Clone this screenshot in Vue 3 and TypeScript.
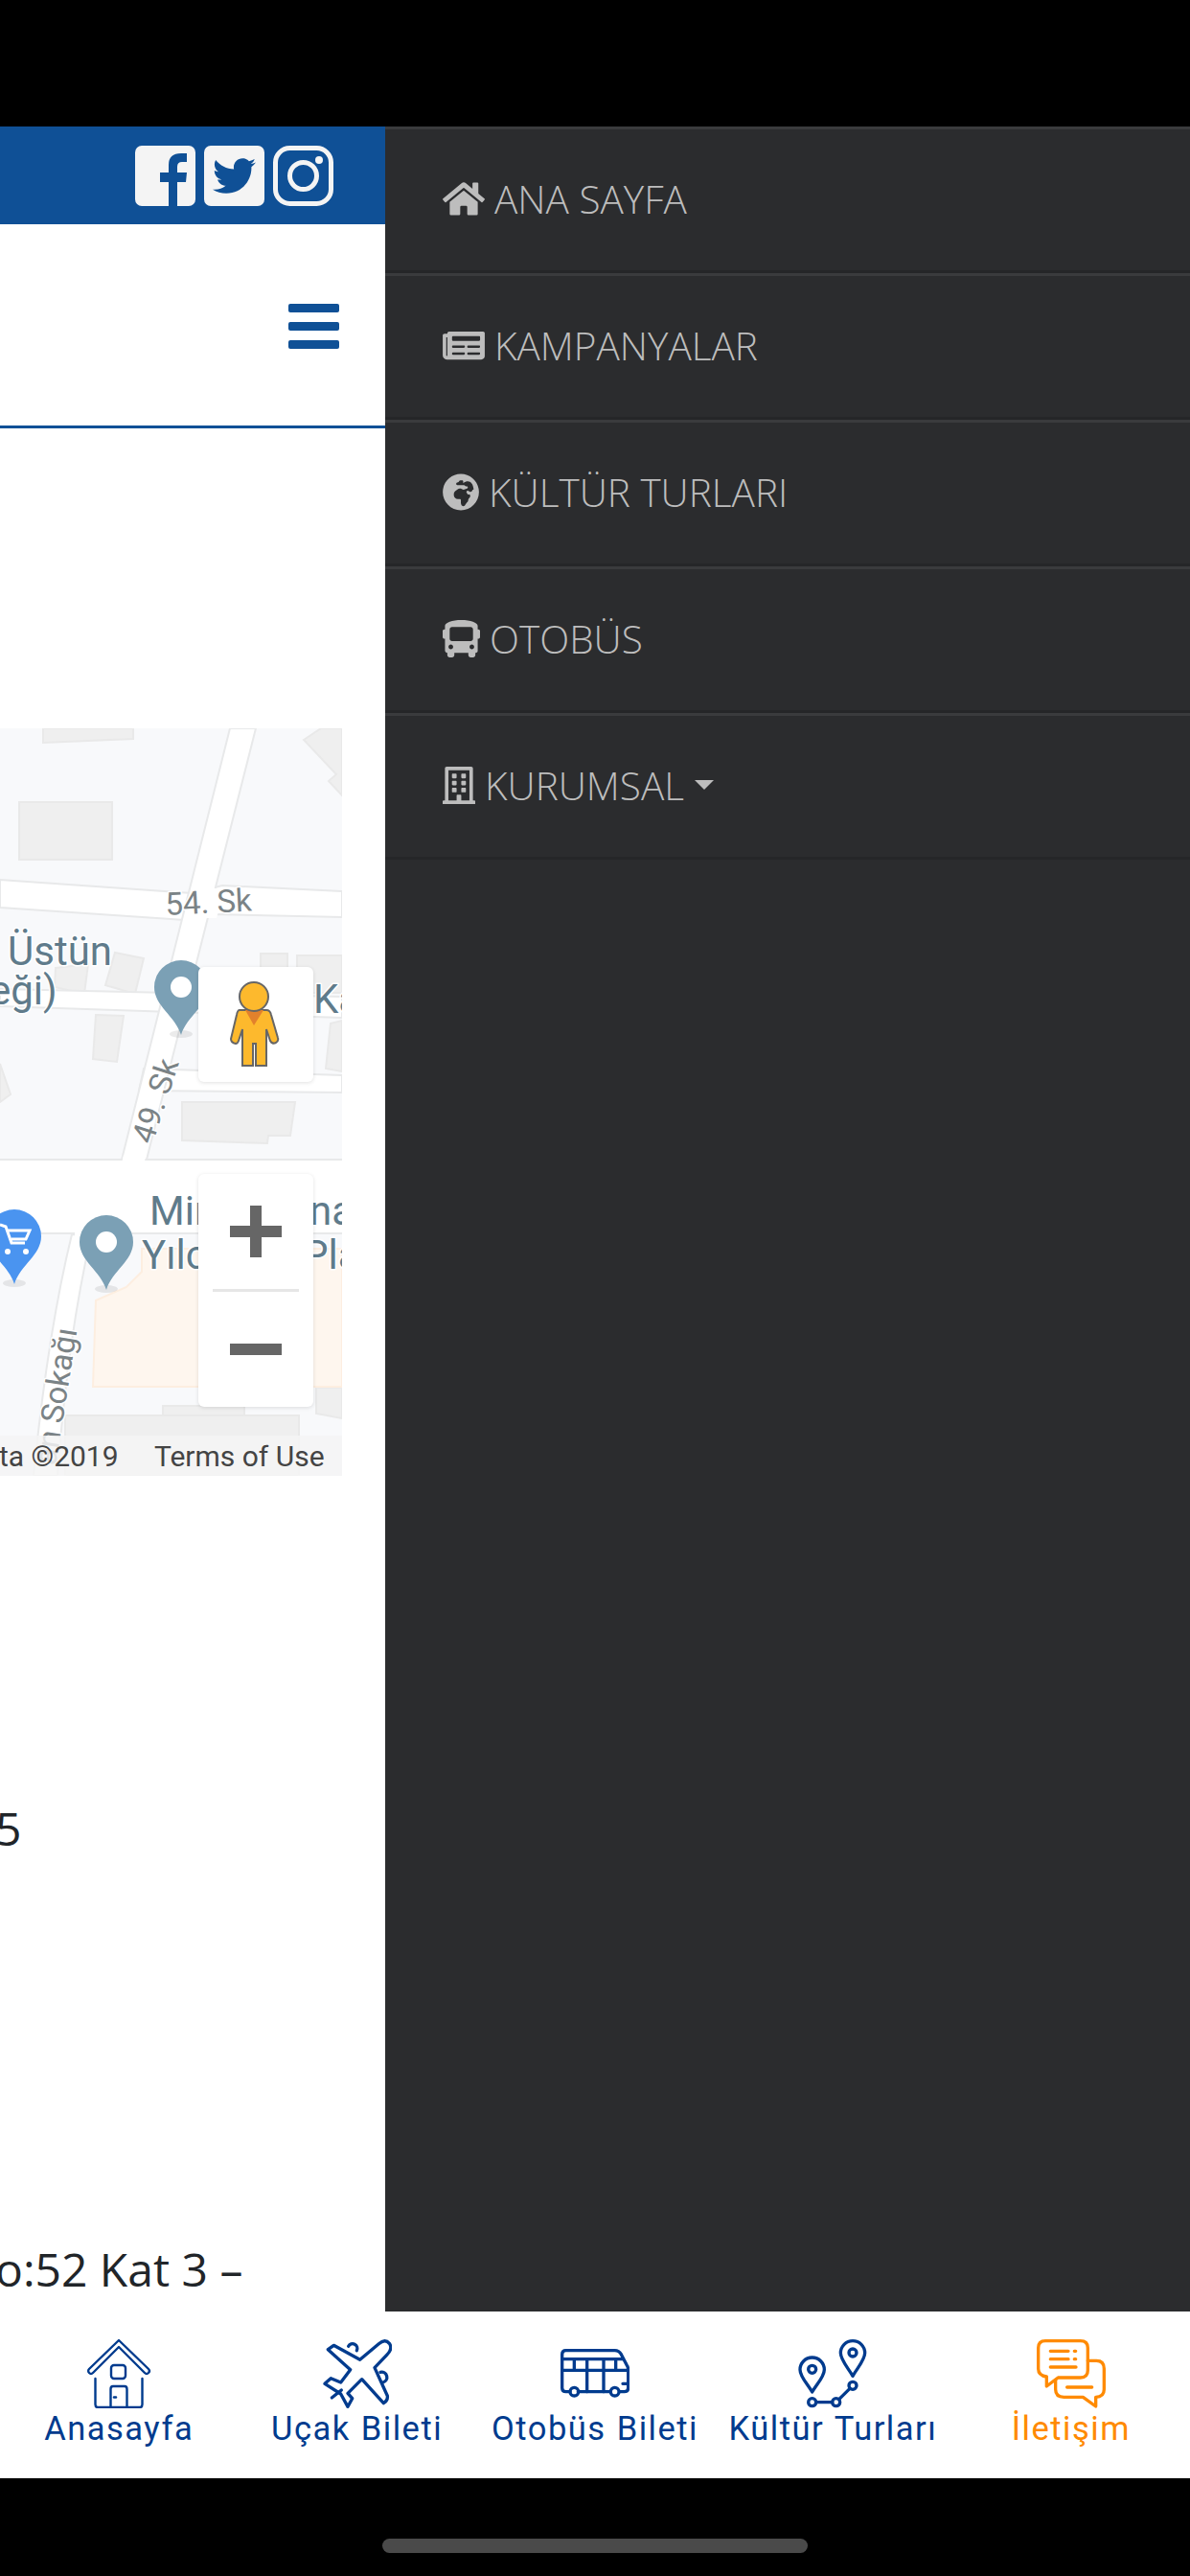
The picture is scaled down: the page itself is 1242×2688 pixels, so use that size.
<script setup lang="ts">
interface MenuItem {
  label: string
  viewBox: string
  width: number
  d: string
  caret?: boolean
}

const menu: MenuItem[] = [
  {
    label: 'ANA SAYFA',
    viewBox: '0 0 576 512',
    width: 44,
    d: 'M280.37 148.26L96 300.11V464a16 16 0 0 0 16 16l112.06-.29a16 16 0 0 0 15.92-16V368a16 16 0 0 1 16-16h64a16 16 0 0 1 16 16v95.64a16 16 0 0 0 16 16.05L464 480a16 16 0 0 0 16-16V300L295.67 148.26a12.19 12.19 0 0 0-15.3 0zM571.6 251.47L488 182.56V44.05a12 12 0 0 0-12-12h-56a12 12 0 0 0-12 12v72.61L318.47 43a48 48 0 0 0-61 0L4.34 251.47a12 12 0 0 0-1.6 16.9l25.5 31A12 12 0 0 0 45.15 301l235.22-193.74a12.19 12.19 0 0 1 15.3 0L530.9 301a12 12 0 0 0 16.9-1.6l25.5-31a12 12 0 0 0-1.7-16.93z'
  },
  {
    label: 'KAMPANYALAR',
    viewBox: '0 0 576 512',
    width: 44,
    d: 'M552 64H88c-13.255 0-24 10.745-24 24v8H24c-13.255 0-24 10.745-24 24v272c0 30.928 25.072 56 56 56h472c26.51 0 48-21.49 48-48V88c0-13.255-10.745-24-24-24zM56 400a8 8 0 0 1-8-8V144h16v248a8 8 0 0 1-8 8zm236-16H140c-6.627 0-12-5.373-12-12v-8c0-6.627 5.373-12 12-12h152c6.627 0 12 5.373 12 12v8c0 6.627-5.373 12-12 12zm208 0H348c-6.627 0-12-5.373-12-12v-8c0-6.627 5.373-12 12-12h152c6.627 0 12 5.373 12 12v8c0 6.627-5.373 12-12 12zm-208-96H140c-6.627 0-12-5.373-12-12v-8c0-6.627 5.373-12 12-12h152c6.627 0 12 5.373 12 12v8c0 6.627-5.373 12-12 12zm208 0H348c-6.627 0-12-5.373-12-12v-8c0-6.627 5.373-12 12-12h152c6.627 0 12 5.373 12 12v8c0 6.627-5.373 12-12 12zm0-96H140c-6.627 0-12-5.373-12-12v-40c0-6.627 5.373-12 12-12h360c6.627 0 12 5.373 12 12v40c0 6.627-5.373 12-12 12z'
  },
  {
    label: 'KÜLTÜR TURLARI',
    viewBox: '0 0 496 512',
    width: 38,
    d: 'M248 8C111.03 8 0 119.03 0 256s111.03 248 248 248 248-111.03 248-248S384.97 8 248 8zm160 215.5v6.93c0 5.87-3.32 11.24-8.57 13.86l-15.39 7.7a15.485 15.485 0 0 1-15.53-.97l-18.21-12.14a15.52 15.52 0 0 0-13.5-1.81l-2.65.88c-9.7 3.23-13.66 14.79-7.99 23.3l13.24 19.86c2.87 4.31 7.71 6.9 12.89 6.9h8.21c8.56 0 15.5 6.94 15.5 15.5v11.34c0 3.35-1.09 6.62-3.1 9.3l-18.74 24.98c-1.42 1.9-2.39 4.1-2.83 6.43l-4.3 22.83c-.62 3.29-2.29 6.29-4.76 8.56a159.608 159.608 0 0 0-25 29.16l-13.03 19.55a27.756 27.756 0 0 1-23.09 12.36c-10.51 0-20.12-5.94-24.82-15.34a78.902 78.902 0 0 1-8.33-35.29V367.5c0-8.56-6.94-15.5-15.5-15.5h-25.88c-14.49 0-28.38-5.76-38.63-16a54.659 54.659 0 0 1-16-38.63v-14.06c0-17.19 8.1-33.38 21.85-43.7l27.58-20.69a54.663 54.663 0 0 1 32.78-10.93h.89c8.48 0 16.85 1.97 24.43 5.77l14.72 7.36c3.68 1.84 7.93 2.14 11.83.84l47.31-15.77c6.33-2.11 10.6-8.03 10.6-14.7 0-8.56-6.94-15.5-15.5-15.5h-10.09c-4.11 0-8.05-1.63-10.96-4.54l-6.92-6.92a15.493 15.493 0 0 0-10.96-4.54H199.5c-8.56 0-15.5-6.94-15.5-15.5v-4.4c0-7.11 4.84-13.31 11.74-15.04l14.45-3.61c3.74-.94 7-3.23 9.14-6.44l8.08-12.11c2.87-4.31 7.71-6.9 12.89-6.9h24.21c8.56 0 15.5 6.94 15.5 15.5v21.7C359.23 71.63 422.02 131.63 422 223.5z'
  },
  {
    label: 'OTOBÜS',
    viewBox: '0 0 512 512',
    width: 39,
    d: 'M488 128h-8V80c0-44.8-99.2-80-224-80S32 35.2 32 80v48h-8c-13.25 0-24 10.74-24 24v80c0 13.25 10.75 24 24 24h8v160c0 17.67 14.33 32 32 32v32c0 17.67 14.33 32 32 32h32c17.67 0 32-14.33 32-32v-32h192v32c0 17.67 14.33 32 32 32h32c17.67 0 32-14.33 32-32v-32h6.4c16 0 25.6-12.8 25.6-25.6V256h8c13.25 0 24-10.75 24-24v-80c0-13.26-10.75-24-24-24zM112 400c-17.67 0-32-14.33-32-32s14.33-32 32-32 32 14.33 32 32-14.33 32-32 32zm16-112c-17.67 0-32-14.33-32-32V128c0-17.67 14.33-32 32-32h256c17.67 0 32 14.33 32 32v128c0 17.67-14.33 32-32 32H128zm272 112c-17.67 0-32-14.33-32-32s14.33-32 32-32 32 14.33 32 32-14.33 32-32 32z'
  },
  {
    label: 'KURUMSAL',
    viewBox: '0 0 448 512',
    width: 34,
    caret: true,
    d: 'M128 148v-40c0-6.6 5.4-12 12-12h40c6.6 0 12 5.4 12 12v40c0 6.6-5.4 12-12 12h-40c-6.6 0-12-5.4-12-12zm140 12h40c6.6 0 12-5.4 12-12v-40c0-6.6-5.4-12-12-12h-40c-6.6 0-12 5.4-12 12v40c0 6.6 5.4 12 12 12zm-128 96h40c6.6 0 12-5.4 12-12v-40c0-6.6-5.4-12-12-12h-40c-6.6 0-12 5.4-12 12v40c0 6.6 5.4 12 12 12zm128 0h40c6.6 0 12-5.4 12-12v-40c0-6.6-5.4-12-12-12h-40c-6.6 0-12 5.4-12 12v40c0 6.6 5.4 12 12 12zm-76 84v-40c0-6.6-5.4-12-12-12h-40c-6.6 0-12 5.4-12 12v40c0 6.6 5.4 12 12 12h40c6.6 0 12-5.4 12-12zm76 12h40c6.6 0 12-5.4 12-12v-40c0-6.6-5.4-12-12-12h-40c-6.6 0-12 5.4-12 12v40c0 6.6 5.4 12 12 12zm180 124v36H0v-36c0-6.6 5.4-12 12-12h19.5V24c0-13.3 10.7-24 24-24h337c13.3 0 24 10.7 24 24v440H436c6.6 0 12 5.4 12 12zM79.5 463H192v-67c0-6.6 5.4-12 12-12h40c6.6 0 12 5.4 12 12v67h112.5V49L80 48l-.5 415z'
  }
]

const buildings: string[] = [
  '45,760 139,760 139,771 45,775',
  '20,837 117,837 117,897 20,897',
  '317,772 335,760 357,760 357,830 343,815 351,808',
  '58,1010 92,1006 88,1037 57,1030',
  '120,994 150,1000 141,1037 110,1028',
  '100,1059 129,1060 122,1108 97,1105',
  '272,995 300,995 300,1040 272,1040',
  '310,997 357,997 357,1036 310,1036',
  '345,1068 357,1065 357,1118 340,1115',
  '190,1150 308,1150 303,1185 280,1185 279,1193 190,1190',
  '0,1110 11,1142 0,1150',
  '330,1448 357,1448 357,1480 330,1475',
  '170,1467 255,1467 255,1477 170,1477',
  '68,1477 312,1477 312,1540 68,1540'
]
</script>

<template>
  <div class="screen">
    <div class="status-bar"></div>

    <div class="middle">
      <div class="page">
        <div class="social-bar">
          <svg class="social" viewBox="0 0 63 63">
            <rect width="63" height="63" rx="7" fill="#f4f4f4" />
            <path d="M35 63V38H26V28H35V20Q35 8 48 8H54V17H49Q44 17 44 22V28H54L53 38H44V63Z" fill="#0f5096" />
          </svg>
          <svg class="social" viewBox="0 0 63 63">
            <rect width="63" height="63" rx="7" fill="#f4f4f4" />
            <svg x="9" y="9" width="45" height="45" viewBox="0 0 512 512">
              <path fill="#0f5096" d="M459.37 151.716c.325 4.548.325 9.097.325 13.645 0 138.72-105.583 298.558-298.558 298.558-59.452 0-114.68-17.219-161.137-47.106 8.447.974 16.568 1.299 25.34 1.299 49.055 0 94.213-16.568 130.274-44.832-46.132-.975-84.792-31.188-98.112-72.772 6.498.974 12.995 1.624 19.818 1.624 9.421 0 18.843-1.3 27.614-3.573-48.081-9.747-84.143-51.98-84.143-102.985v-1.299c13.969 7.797 30.214 12.67 47.431 13.319-28.264-18.843-46.781-51.005-46.781-87.391 0-19.492 5.197-37.36 14.294-52.954 51.655 63.675 129.3 105.258 216.365 109.807-1.624-7.797-2.599-15.918-2.599-24.04 0-57.828 46.782-104.934 104.934-104.934 30.213 0 57.502 12.67 76.67 33.137 23.715-4.548 46.456-13.32 66.599-25.34-7.798 24.366-24.366 44.833-46.132 57.827 21.117-2.273 41.584-8.122 60.426-16.243-14.292 20.791-32.161 39.308-52.628 54.253z" />
            </svg>
          </svg>
          <svg class="social" viewBox="0 0 63 63">
            <rect x="2.5" y="2.5" width="58" height="58" rx="15" fill="none" stroke="#f4f4f4" stroke-width="5" />
            <circle cx="31.5" cy="31.5" r="14" fill="none" stroke="#f4f4f4" stroke-width="5" />
            <circle cx="48" cy="15" r="4" fill="#f4f4f4" />
          </svg>
        </div>

        <div class="header">
          <div class="hamburger"><span></span><span></span><span></span></div>
        </div>

        <div class="map">
          <svg class="map-canvas" viewBox="0 760 357 780">
            <rect x="0" y="760" width="357" height="780" fill="#f8f9fb" />
            <polygon v-for="b in buildings" :key="b" :points="b" fill="#efefef" stroke="#e9e9e9" stroke-width="2" />
            <polygon points="148,1303 357,1303 357,1447 97,1447 100,1357 132,1343 148,1327" fill="#fef6ee" stroke="#fdeee0" stroke-width="2" />
            <g fill="#fff" stroke="#e8e9ea" stroke-width="2">
              <polygon points="0,918 200,932 232,924 357,930 357,957 223,954 193,960 0,947" />
              <polygon points="0,1032 357,1040 357,1062 0,1050" />
              <polygon points="150,1115 357,1122 357,1140 145,1138" />
              <polygon points="240,760 267,760 153,1210 127,1210" />
              <path d="M75 1288Q50 1390 35 1540H60Q70 1400 95 1290Z" />
              <rect x="-4" y="1210" width="365" height="77" />
            </g>
            <g fill="#fff">
              <polygon points="202,927 235,927 226,958 194,958" />
              <polygon points="78,1280 92,1280 92,1292 78,1292" />
              <polygon points="129,1205 153,1205 150,1214 127,1214" />
            </g>

            <g class="label road" font-size="33">
              <text x="173" y="955" transform="rotate(-3 173 955)">54. Sk</text>
              <text x="159" y="1195" transform="rotate(-72 159 1195)">49. Sk</text>
              <text x="58" y="1530" transform="rotate(-81 58 1530)">an Sokağı</text>
            </g>

            <rect x="0" y="1498" width="357" height="42" fill="#f4f4f4" opacity="0.85" />

            <g class="label place" font-size="42">
              <text x="8" y="1007">Üstün</text>
              <text x="-11" y="1048">eği)</text>
              <text x="327" y="1057">Ka</text>
              <text x="156" y="1278">Mir</text>
              <text x="323" y="1278">na</text>
              <text x="148" y="1324">Yılc</text>
              <text x="316" y="1324">Pla</text>
            </g>

            <ellipse cx="189" cy="1079" rx="12" ry="4" fill="#000" opacity="0.08" />
            <path d="M189 1002A28 28 0 0 1 217 1030C217 1050 195 1060 189 1080C183 1060 161 1050 161 1030A28 28 0 0 1 189 1002Z" fill="#7ba0b5" />
            <circle cx="189" cy="1030" r="11" fill="#fff" />

            <ellipse cx="111" cy="1345" rx="12" ry="4" fill="#000" opacity="0.08" />
            <path d="M111 1268A28 28 0 0 1 139 1296C139 1316 117 1326 111 1346C105 1326 83 1316 83 1296A28 28 0 0 1 111 1268Z" fill="#7ba0b5" />
            <circle cx="111" cy="1296" r="11" fill="#fff" />

            <ellipse cx="15" cy="1339" rx="12" ry="4" fill="#000" opacity="0.08" />
            <path d="M15 1262A28 28 0 0 1 43 1290C43 1310 21 1320 15 1340C9 1320 -13 1310 -13 1290A28 28 0 0 1 15 1262Z" fill="#4a94f0" />
            <path d="M0 1278L6 1280L12 1297H26M8 1284H31L27 1293H12" fill="none" stroke="#fff" stroke-width="3" />
            <circle cx="8" cy="1306" r="3" fill="#fff" />
            <circle cx="27" cy="1306" r="3" fill="#fff" />

            <text class="legal" x="-1" y="1530" font-size="30">ta ©2019</text>
            <text class="legal" x="161" y="1530" font-size="30">Terms of Use</text>
          </svg>

          <div class="map-control pegman-box">
            <svg class="pegman" viewBox="238 1024 54 92">
              <path d="M250 1055Q248 1055 247 1060L241 1085Q241 1089 246 1090Q248 1090 249 1087L253 1075V1113H264V1090H267V1113H278V1075L282 1087Q284 1091 288 1089Q291 1087 290 1084L283 1060Q282 1055 278 1055Z" fill="#fdb92d" stroke="#666" stroke-width="2" />
              <polygon points="256,1055 275,1055 265,1071" fill="#e2812c" />
              <circle cx="265" cy="1041" r="15" fill="#fdb92d" stroke="#666" stroke-width="2" />
            </svg>
          </div>

          <div class="map-control zoom-box">
            <div class="zoom-btn"><span class="plus"></span></div>
            <div class="zoom-divider"></div>
            <div class="zoom-btn"><span class="minus"></span></div>
          </div>
        </div>

        <p class="line line-phone">5</p>
        <p class="line line-address">o:52 Kat 3 –</p>
      </div>

      <nav class="drawer">
        <ul class="drawer-list">
          <li v-for="item in menu" :key="item.label" class="drawer-item">
            <svg class="drawer-icon" :viewBox="item.viewBox" :width="item.width" height="39">
              <path :d="item.d" />
            </svg>
            <span>{{ item.label }}</span>
            <i v-if="item.caret" class="caret"></i>
          </li>
        </ul>
      </nav>
    </div>

    <div class="tabs">
      <div class="tab">
        <svg class="tab-icon" viewBox="0 0 72 72" fill="none" stroke="#003b8e" stroke-width="2.4" stroke-linejoin="round" stroke-linecap="round">
          <path d="M36 1L67 31A2.6 2.6 0 0 1 63 35L36 8L9 35A2.6 2.6 0 0 1 5 31Z" />
          <path d="M11.5 41V68Q11.5 71 14 71H58Q60.500 71 60.500 68V41" />
          <rect x="28" y="27" width="15" height="14" rx="3" />
          <path d="M27.500 71V52Q27.500 49 30 49H42Q44.500 49 44.500 52V71" />
          <path d="M31 60.500H33" />
        </svg>
        <span>Anasayfa</span>
      </div>

      <div class="tab">
        <svg class="tab-icon" viewBox="50 33 216 216" fill="none" stroke="#003b8e" stroke-width="10" stroke-linejoin="round" stroke-linecap="round">
          <path d="M225 47Q245 30 258 46Q270 62 250 82L212 122L252 210Q254 224 240 233L172 158L128 202L142 218L128 244L106 204L56 172L75 155L106 168L136 128L66 65L84 52L166 97Z" />
          <path d="M130 55A13 13 0 0 1 156 68" />
          <path d="M230 136A13 13 0 0 1 238 168" />
          <path d="M78 216L108 192" />
        </svg>
        <span>Uçak Bileti</span>
      </div>

      <div class="tab">
        <svg class="tab-icon" viewBox="795 33 216 216" fill="none" stroke="#003b8e" stroke-width="10" stroke-linejoin="round" stroke-linecap="round">
          <path d="M825 197H812Q800 197 800 185V80Q800 68 812 68H965Q978 68 985 80L1003 115Q1007 120 1007 130V185Q1007 197 995 197H980M850 197H952" />
          <path d="M800 95H990M800 130H1007M838 95V130M878 95V197M930 95V197M968 95V130M990 172H1007" />
          <circle cx="838" cy="197" r="13" />
          <circle cx="965" cy="197" r="13" />
        </svg>
        <span>Otobüs Bileti</span>
      </div>

      <div class="tab">
        <svg class="tab-icon" viewBox="41 33 216 216" fill="none" stroke="#003b8e" stroke-width="10" stroke-linejoin="round" stroke-linecap="round">
          <path d="M85 90A38 38 0 0 1 123 128C123 150 100 172 85 198C70 172 47 150 47 128A38 38 0 0 1 85 90Z" />
          <circle cx="85" cy="127" r="12" />
          <path d="M212 38A38 38 0 0 1 250 76C250 98 227 122 212 148C197 122 174 98 174 76A38 38 0 0 1 212 38Z" />
          <circle cx="212" cy="75" r="12" />
          <circle cx="212" cy="178" r="12" />
          <circle cx="160" cy="230" r="12" />
          <circle cx="85" cy="230" r="12" />
          <path d="M97 230H148M169 221L203 187" />
        </svg>
        <span>Kültür Turları</span>
      </div>

      <div class="tab active">
        <svg class="tab-icon" viewBox="785 33 216 216" fill="none" stroke="#ff8a00" stroke-width="10" stroke-linejoin="round" stroke-linecap="round">
          <path d="M812 38H922Q945 38 945 60V130Q945 153 922 153H852L816 180V150Q790 146 790 125V60Q790 38 812 38Z" />
          <path d="M945 100H972Q996 100 996 125V190Q996 214 970 214V243L930 214H870Q844 214 844 190V160" />
          <path d="M828 70H884M828 95H884M828 120H908M880 183H958M903 70H907M903 95H907" />
        </svg>
        <span>İletişim</span>
      </div>
    </div>

    <div class="home-area"><div class="home-indicator"></div></div>
  </div>
</template>

<style>
html, body {
  margin: 0;
  background: #000;
}
</style>

<style scoped>
.screen {
  width: 1242px;
  height: 2688px;
  display: flex;
  flex-direction: column;
  overflow: hidden;
  background: #000;
}
.status-bar {
  height: 132px;
  flex: none;
}
.middle {
  flex: 1;
  min-height: 0;
  display: flex;
}
.page {
  width: 402px;
  flex: none;
  background: #fff;
  overflow: hidden;
}
.social-bar {
  height: 102px;
  background: #0f5096;
  box-sizing: border-box;
  padding: 20px 54px 0 0;
  display: flex;
  justify-content: flex-end;
  gap: 9px;
}
.social {
  width: 63px;
  height: 63px;
  display: block;
}
.header {
  height: 213px;
  box-sizing: border-box;
  border-bottom: 3px solid #0f5096;
  padding: 83px 48px 0 0;
  display: flex;
  justify-content: flex-end;
}
.hamburger {
  width: 53px;
  display: flex;
  flex-direction: column;
  gap: 10px;
}
.hamburger span {
  display: block;
  height: 9px;
  border-radius: 2px;
  background: #0f5096;
}
.map {
  position: relative;
  width: 357px;
  height: 780px;
  margin-top: 313px;
  overflow: hidden;
}
.map-canvas {
  display: block;
  width: 357px;
  height: 780px;
}
.label text {
  font-family: Roboto, sans-serif;
  paint-order: stroke;
  stroke: #fff;
  stroke-width: 3px;
  stroke-linejoin: round;
}
.road text {
  fill: #7b8386;
}
.place text {
  fill: #5f7b8b;
}
.legal {
  font-family: Roboto, sans-serif;
  fill: #444;
}
.map-control {
  position: absolute;
  left: 207px;
  width: 120px;
  background: #fff;
  border-radius: 6px;
  box-shadow: 0 1px 4px rgba(0, 0, 0, 0.12);
}
.pegman-box {
  top: 249px;
  height: 120px;
  display: flex;
  align-items: center;
  justify-content: center;
}
.pegman {
  display: block;
  width: 54px;
  height: 92px;
  margin-right: 4px;
}
.zoom-box {
  top: 465px;
  height: 243px;
  display: flex;
  flex-direction: column;
}
.zoom-btn {
  flex: 1;
  display: flex;
  align-items: center;
  justify-content: center;
}
.zoom-divider {
  height: 3px;
  margin: 0 15px;
  background: #e6e6e6;
  flex: none;
}
.plus {
  display: block;
  width: 54px;
  height: 54px;
  background:
    linear-gradient(#666, #666) center / 54px 12px no-repeat,
    linear-gradient(#666, #666) center / 12px 54px no-repeat;
}
.minus {
  display: block;
  width: 54px;
  height: 12px;
  background: #666;
}
.line {
  margin: 0;
  font-family: "Open Sans", sans-serif;
  font-size: 48px;
  line-height: 60px;
  color: #212529;
  white-space: nowrap;
}
.line-phone {
  margin: 338px 0 0 -5px;
}
.line-address {
  margin: 400px 0 0 -5px;
}
.drawer {
  flex: 1;
  background: #2b2c2e;
}
.drawer-list {
  list-style: none;
  margin: 0;
  padding: 0;
}
.drawer-item {
  height: 153px;
  box-sizing: border-box;
  border-top: 3px solid #3a3b3d;
  border-bottom: 3px solid #252628;
  padding: 0 0 3px 60px;
  display: flex;
  align-items: center;
  gap: 10px;
  font-family: "Open Sans", sans-serif;
  font-size: 40.5px;
  font-weight: 300;
  color: #bdbdbd;
}
.drawer-icon {
  display: block;
  flex: none;
  fill: #bdbdbd;
}
.caret {
  width: 0;
  height: 0;
  margin-left: 1px;
  border-top: 10px solid #bdbdbd;
  border-left: 10px solid transparent;
  border-right: 10px solid transparent;
}
.tabs {
  height: 174px;
  flex: none;
  background: #fff;
  display: flex;
}
.tab {
  flex: 1;
  min-width: 0;
  padding-top: 29px;
  display: flex;
  flex-direction: column;
  align-items: center;
  font-family: Roboto, sans-serif;
  font-size: 34.5px;
  letter-spacing: 1.5px;
  word-spacing: 1px;
  line-height: 42px;
  color: #003b8e;
  white-space: nowrap;
}
.tab.active {
  color: #ff8a00;
}
.tab-icon {
  display: block;
  width: 72px;
  height: 72px;
}
.home-area {
  height: 102px;
  flex: none;
  padding-top: 63px;
  box-sizing: border-box;
  display: flex;
  justify-content: center;
}
.home-indicator {
  width: 444px;
  height: 15px;
  border-radius: 8px;
  background: #4a4a4a;
}
</style>
